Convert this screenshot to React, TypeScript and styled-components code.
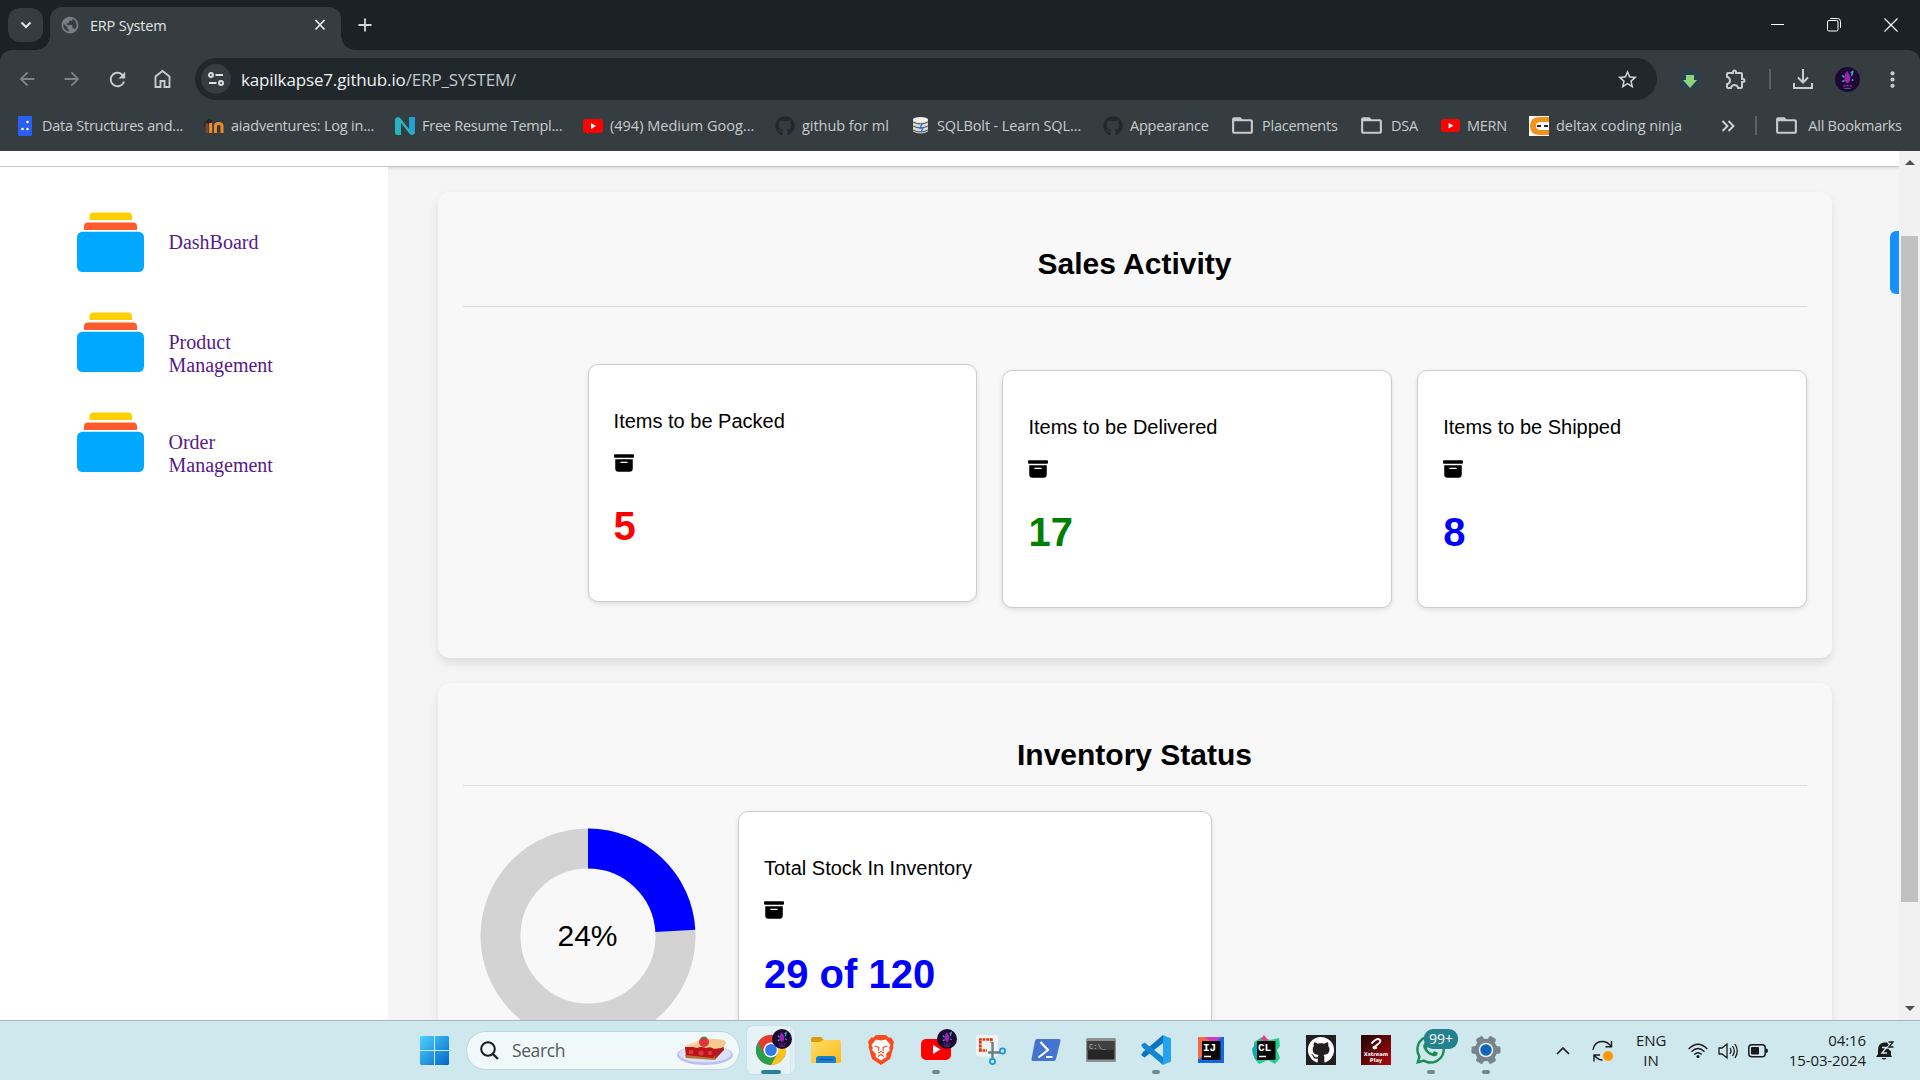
import React from "react";
import styled, { createGlobalStyle } from "styled-components";
import {
  MdArrowBack,
  MdArrowForward,
  MdRefresh,
  MdStarBorder,
  MdOutlineExtension,
  MdMoreVert,
  MdFolderOpen,
  MdPublic,
} from "react-icons/md";
import { BsFillArchiveFill } from "react-icons/bs";
import { FaGithub, FaWhatsapp } from "react-icons/fa";

const GlobalStyle = createGlobalStyle`
  * { box-sizing: border-box; }
  html, body { margin: 0; padding: 0; overflow: hidden; }
  svg { display: block; flex: none; }
`;

const ui = `"Open Sans", "Noto Sans", sans-serif`;

const Screen = styled.div`
  width: 1920px;
  height: 1080px;
  overflow: hidden;
  display: grid;
  grid-template-columns: 1920px;
  grid-template-rows: 50px 101px 869px 60px;
  background: #1b2225;
  font-family: ${ui};
`;

/* ---------- tab strip ---------- */

const TabStrip = styled.div`
  display: flex;
  align-items: stretch;
  background: #1b2225;
  color: #e3e6e6;
`;

const TabSearch = styled.div`
  width: 35px;
  height: 34px;
  margin: 8px 7px 0 8px;
  border-radius: 12px;
  background: #353d40;
  display: flex;
  align-items: center;
  justify-content: center;
`;

const Tab = styled.div`
  position: relative;
  width: 291px;
  height: 43px;
  margin-top: 7px;
  padding: 0 11px 7px 10px;
  display: flex;
  align-items: center;
  border-radius: 12px 12px 0 0;
  background: #353d40;
  &::before,
  &::after {
    content: "";
    position: absolute;
    bottom: 0;
    width: 14px;
    height: 14px;
  }
  &::before {
    left: -14px;
    background: radial-gradient(circle at 0 0, transparent 13.5px, #353d40 14px);
  }
  &::after {
    right: -14px;
    background: radial-gradient(circle at 100% 0, transparent 13.5px, #353d40 14px);
  }
`;

const TabTitle = styled.span`
  flex: 1;
  margin-left: 10px;
  font-size: 14.5px;
  letter-spacing: -0.2px;
`;

const NewTab = styled.div`
  width: 20px;
  margin-left: 13px;
  display: flex;
  align-items: center;
`;

const WindowButtons = styled.div`
  margin-left: auto;
  margin-right: 22px;
  display: flex;
  align-items: center;
  gap: 43px;
`;

/* ---------- toolbar and bookmarks ---------- */

const Toolbar = styled.div`
  background: #353d40;
  border-radius: 12px 12px 0 0;
  color: #c7cccd;
`;

const AddressRow = styled.div`
  height: 58px;
  display: flex;
  align-items: center;
`;

const NavButtons = styled.div`
  width: 195px;
  padding-left: 16px;
  display: flex;
  gap: 23px;
`;

const Dim = styled.span`
  color: #7d8486;
`;

const AddressBar = styled.div`
  width: 1462px;
  height: 42px;
  padding: 0 18px 0 6px;
  border-radius: 21px;
  background: #20282b;
  display: flex;
  align-items: center;
`;

const SiteInfo = styled.div`
  width: 30px;
  height: 30px;
  border-radius: 50%;
  background: #353d40;
  display: flex;
  align-items: center;
  justify-content: center;
`;

const Url = styled.div`
  flex: 1;
  margin-left: 10px;
  font-size: 17px;
  letter-spacing: -0.15px;
  color: #c3c8c9;
  b {
    font-weight: 400;
    color: #f0f2f2;
  }
`;

const ToolbarIcons = styled.div`
  flex: 1;
  display: flex;
  align-items: center;
  padding-left: 24px;
`;

const Slot = styled.div<{ $w: number; $ml?: number }>`
  width: ${(p) => p.$w}px;
  margin-left: ${(p) => p.$ml ?? 0}px;
  flex: none;
  display: flex;
  justify-content: center;
`;

const Divider = styled.div<{ $h: number }>`
  width: 2px;
  height: ${(p) => p.$h}px;
  background: #5a6264;
`;

const BookmarkRow = styled.div`
  height: 35px;
  display: flex;
  align-items: center;
  padding-left: 18px;
`;

const BookmarkItem = styled.div<{ $w: number }>`
  width: ${(p) => p.$w}px;
  display: flex;
  align-items: center;
`;

const BookmarkIcon = styled.div<{ $w: number }>`
  width: ${(p) => p.$w}px;
  flex: none;
`;

const BookmarkText = styled.span<{ $ls?: number }>`
  font-size: 14.5px;
  letter-spacing: ${(p) => p.$ls ?? -0.25}px;
  white-space: nowrap;
`;

/* ---------- page ---------- */

const Viewport = styled.div`
  display: grid;
  grid-template-columns: 1899px 21px;
  overflow: hidden;
  background: #fff;
`;

const Page = styled.div`
  position: relative;
  height: 869px;
  overflow: hidden;
  display: grid;
  grid-template-rows: 16px 853px;
`;

const PageHeader = styled.div`
  background: #fff;
  border-bottom: 1px solid #c6c6c6;
`;

const Body = styled.div`
  display: grid;
  grid-template-columns: 388px 1fr;
`;

const Sidebar = styled.nav`
  background: #fff;
  padding: 45px 0 0 77px;
  display: flex;
  flex-direction: column;
`;

const NavItem = styled.a`
  height: 100px;
  display: flex;
  font-family: "Liberation Serif", serif;
  font-size: 20px;
  line-height: 23px;
  color: #551a8b;
`;

const NavLabel = styled.span`
  width: 120px;
  margin: 19px 0 0 23.5px;
`;

const Main = styled.main`
  background: #f5f5f5;
  padding: 25px 67px 0 50px;
  box-shadow: inset 0 4px 3px -2px rgba(0, 0, 0, 0.09);
  font-family: "Liberation Sans", Arial, sans-serif;
  color: #000;
`;

const Panel = styled.section<{ $h: number }>`
  height: ${(p) => p.$h}px;
  padding: 25px;
  margin-bottom: 25px;
  border-radius: 12px;
  background: #f8f8f8;
  box-shadow: 0 5px 10px rgba(0, 0, 0, 0.1);
`;

const PanelTitle = styled.h2<{ $gap: number }>`
  margin: 0;
  padding: 29px 1px ${(p) => p.$gap}px 0;
  border-bottom: 1px solid #dcdcdc;
  text-align: center;
  font-size: 30px;
  line-height: 36px;
`;

const CardRow = styled.div`
  display: flex;
  justify-content: flex-end;
  align-items: flex-start;
  gap: 25px;
  padding-top: 63px;
`;

const InventoryRow = styled.div`
  display: flex;
  gap: 25px;
  padding-top: 25px;
`;

const Card = styled.div<{ $w: number; $raised?: boolean }>`
  width: ${(p) => p.$w}px;
  height: 238px;
  margin-top: ${(p) => (p.$raised ? -6 : 0)}px;
  padding: 44px 24px 0 25px;
  border: 1px solid #ccc;
  border-radius: 10px;
  background: #fff;
  box-shadow: 0 2px 5px rgba(0, 0, 0, 0.1);
`;

const CardLabel = styled.div`
  font-size: 20px;
  line-height: 24px;
  margin-bottom: 20px;
`;

const CardValue = styled.div<{ $color: string; $drop?: number }>`
  margin-top: ${(p) => 30 + (p.$drop ?? 0)}px;
  font-size: 40px;
  line-height: 46px;
  font-weight: 700;
  color: ${(p) => p.$color};
`;

const SideHandle = styled.div`
  position: absolute;
  right: 0;
  top: 80px;
  width: 9px;
  height: 63px;
  border-radius: 6px 0 0 6px;
  background: #1890ff;
`;

const Scrollbar = styled.div`
  background: #f1f1f1;
  display: flex;
  flex-direction: column;
  align-items: center;
  padding: 9px 0 9px;
`;

const Thumb = styled.div`
  width: 17px;
  height: 666px;
  margin: 71px 0 auto;
  background: #c1c1c1;
`;

/* ---------- taskbar ---------- */

const Taskbar = styled.div`
  display: flex;
  align-items: center;
  background: #cfe8ee;
  border-top: 1px solid #a5b8c0;
  padding-left: 420px;
  color: #1b1b1b;
`;

const SearchBox = styled.div`
  width: 274px;
  height: 39px;
  flex: none;
  margin: 0 7px 0 17px;
  padding: 0 6px 0 13px;
  border-radius: 20px;
  background: #f0f8fa;
  border: 1px solid #bdd5dc;
  display: flex;
  align-items: center;
`;

const SearchText = styled.span`
  flex: 1;
  margin-left: 13px;
  font-size: 17.5px;
  letter-spacing: -0.4px;
  line-height: 22px;
  padding-bottom: 2px;
  color: #53595b;
`;

const Apps = styled.div`
  display: flex;
  height: 60px;
`;

const AppButton = styled.div<{ $active?: boolean }>`
  position: relative;
  flex: none;
  width: ${(p) => (p.$active ? 48 : 49)}px;
  height: 48px;
  margin: 5px 6px 0 0;
  border-radius: 6px;
  background: ${(p) => (p.$active ? "linear-gradient(90deg, #e6f3f6 43px, #cfe0e5 43px, #dfeff3 44px)" : "transparent")};
  box-shadow: ${(p) => (p.$active ? "0 0 1px #9fb9c0" : "none")};
  display: flex;
  align-items: center;
  justify-content: center;
`;

const Indicator = styled.div<{ $active?: boolean }>`
  position: absolute;
  bottom: 0;
  left: 50%;
  width: ${(p) => (p.$active ? 20 : 8)}px;
  height: 4px;
  margin-left: ${(p) => (p.$active ? -10 : -4)}px;
  border-radius: 2px;
  background: ${(p) => (p.$active ? "#2a8296" : "#76878c")};
`;

const AppBadge = styled.div`
  position: absolute;
  right: 3px;
  top: 3px;
`;

const CountBadge = styled.div`
  position: absolute;
  left: 18px;
  top: 3px;
  width: 34px;
  height: 20px;
  border-radius: 9px;
  background: #24828f;
  color: #fff;
  font-size: 14px;
  line-height: 19px;
  text-align: center;
`;

const Tray = styled.div`
  flex: 1;
  display: flex;
  align-items: center;
  padding-left: 40px;
`;

const TrayText = styled.div<{ $w: number; $align: string }>`
  width: ${(p) => p.$w}px;
  flex: none;
  padding-bottom: 2px;
  text-align: ${(p) => p.$align};
  font-size: 15px;
  line-height: 20px;
  letter-spacing: -0.1px;
  white-space: nowrap;
`;

/* ---------- drawings ---------- */

const Youtube = ({ w = 20 }: { w?: number }) => (
  <svg width={w} height={(w * 14) / 20} viewBox="0 0 20 14">
    <rect width="20" height="14" rx="3.4" fill="#f00" />
    <path d="M8 4v6l5-3z" fill="#fff" />
  </svg>
);

const Avatar = ({ size = 24 }: { size?: number }) => (
  <svg width={size} height={size} viewBox="0 0 24 24">
    <circle cx="12" cy="12" r="12" fill="#1f0733" />
    <path d="M10 6l2-2 1.500 3 1.500 2-1 5-2 2-3-3 .5-4z" fill="#a01fb4" />
    <path d="M7 8l2 2M15 5.500l2-1-1 4M7 14l2-1M16 12l1.500 1" stroke="#1fb6c4" strokeWidth="1.500" fill="none" />
    <path d="M8 18h8" stroke="#9a2aa8" strokeWidth="1.300" strokeDasharray="2 1" />
    <path d="M9 20.500h6" stroke="#3d6fb0" strokeWidth="1" />
  </svg>
);

const Prompt = ({ label, children }: { label: string; children?: React.ReactNode }) => (
  <svg width="30" height="30" viewBox="0 0 30 30">
    {children}
    <rect x="6" y="6" width="18.500" height="19" fill="#090909" />
    <text x="7" y="15.500" fontFamily="Liberation Mono, monospace" fontWeight="700" fontSize="11" fill="#fff">
      {label}
    </text>
    <path d="M8 21.500h7" stroke="#fff" strokeWidth="1.500" />
  </svg>
);

const Chrome = () => (
  <svg width="30" height="30" viewBox="0 0 30 30">
    <circle cx="15" cy="15" r="15" fill="#e33b2e" />
    <path d="M2 7.500A15 15 0 0 0 15 30l6.500-11.300L15 15z" fill="#2b9f4b" />
    <path d="M28 7.500A15 15 0 0 1 15 30l6.500-11.300L22 12l-7-4.500z" fill="#fcc31e" />
    <path d="M2 7.500A15 15 0 0 1 28 7.500H15L8.500 18.700z" fill="#e33b2e" />
    <circle cx="15" cy="15" r="7.500" fill="#fff" />
    <circle cx="15" cy="15" r="5.900" fill="#3578e8" />
  </svg>
);

const Explorer = () => (
  <svg width="30" height="28" viewBox="0 0 30 28">
    <defs>
      <linearGradient id="folder" x2="1" y2="1">
        <stop offset="0" stopColor="#ffdc6a" />
        <stop offset="1" stopColor="#fdbb16" />
      </linearGradient>
    </defs>
    <path d="M0 3q0-2 2-2h8l3 3-3 4H0z" fill="#dc9d08" />
    <path d="M0 6h9l3-2h16q2 0 2 2v19.500q0 1.500-1.500 1.500H0z" fill="url(#folder)" />
    <path d="M5 27v-4q0-3 3-3h14q3 0 3 3v4z" fill="#1480d0" />
    <path d="M8.500 23.500h13" stroke="#084f92" strokeWidth="1.300" />
  </svg>
);

const Brave = () => (
  <svg width="26" height="30" viewBox="0 0 26 30">
    <path d="M8 0h10l2.500 2.500h2.500L26 7l-1 3 .5 2L22 24l-9 6-9-6L.5 12 1 10 0 7l3-4.500h2.500z" fill="#fb4a1b" />
    <path
      d="M8 4.500l5 1 5-1 4.500 5.500-1.500 3 1 2-4 4 .5 3-5.500 3.500L7.500 22l.5-3-4-4 1-2-1.500-3z"
      fill="#fff"
    />
    <path d="M6.500 11l4.500 1.500-.5 3.500M19.500 11L15 12.500l.5 3.500M10 18l3-1.500L16 18M10 21.500l3-2 3 2" stroke="#fb4a1b" strokeWidth="1.100" fill="none" />
  </svg>
);

const Snip = () => (
  <svg width="30" height="30" viewBox="0 0 30 30">
    <rect width="22" height="21.500" rx="3" fill="#f1f1f1" />
    <path d="M3 4.500h13.500M4.300 6v11" stroke="#d83b12" strokeWidth="2.700" strokeDasharray="2.800 .8" fill="none" />
    <path d="M3 15.500h8M15.200 3.500v4" stroke="#d83b12" strokeWidth="2.700" strokeDasharray="2.800 .8" />
    <path d="M16.500 7v16M12 17.500h12" stroke="#6b7f89" strokeWidth="2.400" />
    <circle cx="16.500" cy="26.500" r="2.600" fill="none" stroke="#1795dd" strokeWidth="1.700" />
    <circle cx="26.500" cy="16" r="2.600" fill="none" stroke="#1795dd" strokeWidth="1.700" />
  </svg>
);

const PowerShell = () => (
  <svg width="30" height="22" viewBox="0 0 30 22">
    <path d="M6 0h22q2 0 1.500 2L25 20q-.5 2-2.500 2H2q-2 0-1.500-2L4 2q.5-2 2-2z" fill="#4474cf" />
    <path d="M9.500 3l7.500 8-9.500 7.500M15 18h6.500" stroke="#fff" strokeWidth="2.200" fill="none" />
  </svg>
);

const Terminal = () => (
  <svg width="30" height="24" viewBox="0 0 30 24">
    <rect width="30" height="24" rx="1.500" fill="#8d9091" />
    <rect x="1.500" y="3" width="27" height="18.500" fill="#262626" />
    <path d="M1.500 3h27v9h-27z" fill="#414141" />
    <text x="3" y="11" fontFamily="Liberation Mono, monospace" fontSize="7" fill="#c0c0c0">
      C:\_
    </text>
  </svg>
);

const VSCode = () => (
  <svg width="30" height="30" viewBox="0 0 30 30">
    <path d="M22 0l8 3.500v23L22 30z" fill="#25a4ee" />
    <path d="M22 0v8L3.500 22.500 0 20l2-3z" fill="#0b74bd" />
    <path d="M0 10l3.500-2.500L22 22v8L2 13z" fill="#1286d4" />
  </svg>
);

const Airtel = () => (
  <svg width="30" height="30" viewBox="0 0 30 30">
    <defs>
      <linearGradient id="airtel" x2="1" y2="1">
        <stop offset="0" stopColor="#1c0304" />
        <stop offset="1" stopColor="#b00a10" />
      </linearGradient>
    </defs>
    <rect width="30" height="30" fill="url(#airtel)" />
    <path d="M10.500 8.500Q16 2.500 18.500 4.500t-2 5q-2 2-4 3 0 2 3.500 0" stroke="#fff" strokeWidth="2" fill="none" />
    <text x="15" y="20.500" textAnchor="middle" fontFamily="DejaVu Sans, sans-serif" fontWeight="700" fontSize="5.200" fill="#fff">
      Xstream
    </text>
    <text x="15" y="27" textAnchor="middle" fontFamily="DejaVu Sans, sans-serif" fontWeight="700" fontSize="5.200" fill="#fff">
      Play
    </text>
  </svg>
);

const Gear = () => (
  <svg width="30" height="30" viewBox="-15 -15 30 30">
    {[0, 60, 120].map((a) => (
      <rect key={a} x="-3.800" y="-14.500" width="7.600" height="29" rx="1.800" fill="#79838b" transform={`rotate(${a + 30})`} />
    ))}
    <circle r="11.300" fill="#79838b" />
    <circle r="7.300" fill="#e6edf0" />
    <circle r="5.700" fill="#0f66b8" />
  </svg>
);

const Pie = () => (
  <svg width="56" height="30" viewBox="0 0 56 30">
    <ellipse cx="28" cy="19" rx="28" ry="10" fill="#b9c1f0" />
    <ellipse cx="28" cy="18" rx="26" ry="8.500" fill="#dde2fb" />
    <path d="M8 11h33l3 3-8 9-27-2z" fill="#b8141b" />
    <path d="M8 19l28 3 8-9 2 1-8 10-29-2z" fill="#b8752f" />
    <path d="M39 12l7-4 1 6-9 9z" fill="#b01a1c" />
    <path d="M7 11Q20 2.500 38 3q9 0 11 3 0 4-5 6l-7 1q-3-3-8-1-5-2-9 0-6-2-13-1z" fill="#f3c98d" />
    <path d="M9 10q12-5 22-4" stroke="#fbe0b4" strokeWidth="1.600" fill="none" />
    <circle cx="27" cy="6" r="5" fill="#e0333b" />
    <path d="M24 1.500q3-2 6 0l-3 2z" fill="#4d8b34" />
    <circle cx="14" cy="16" r="2.300" fill="#df373c" />
    <circle cx="24" cy="17" r="2.600" fill="#df373c" />
    <circle cx="33" cy="17" r="2.300" fill="#df373c" />
  </svg>
);

const StackIcon = () => (
  <svg width="68" height="60" viewBox="0 0 68 60">
    <path d="M12.500 8V4.500q0-4 4-4h34.500q4 0 4 4V8z" fill="#ffcf00" />
    <path d="M7 18v-3.500q0-4 4-4h45q4 0 4 4V18z" fill="#ff5a2c" />
    <rect y="19.700" width="67" height="40.300" rx="5.500" fill="#00a9ff" />
  </svg>
);

const Donut = ({ percent }: { percent: number }) => {
  const length = 2 * Math.PI * 87.5;
  return (
    <svg width="250" height="250" viewBox="0 0 250 250">
      <circle cx="125" cy="125" r="87.500" fill="none" stroke="#d3d3d3" strokeWidth="40" />
      <circle
        cx="125"
        cy="125"
        r="87.500"
        fill="none"
        stroke="#00f"
        strokeWidth="40"
        strokeDasharray={`${(length * percent) / 100} ${length}`}
        transform="rotate(-90 125 125)"
      />
      <text x="124.500" y="135" textAnchor="middle" fontFamily="Liberation Sans, Arial, sans-serif" fontSize="30">
        {percent}%
      </text>
    </svg>
  );
};

const GreyFolder = () => <MdFolderOpen size={25} />;

const bookmarks: { text: string; w: number; iw: number; ls?: number; icon: React.ReactNode }[] = [
  {
    text: "Data Structures and...", w: 186, iw: 24,
    icon: (
      <svg width="14" height="20" viewBox="0 0 14 20">
        <rect width="14" height="20" rx="1" fill="#2a5ff5" />
        <g fill="#fff"><circle cx="9.500" cy="6" r="1.300" /><circle cx="4.500" cy="13" r="1.300" /><circle cx="9.500" cy="13" r="1.300" /></g>
      </svg>
    ),
  },
  {
    text: "aiadventures: Log in...", w: 191, iw: 27, ls: -0.19,
    icon: (
      <svg width="20" height="16" viewBox="0 0 20 16">
        <path d="M3 15V5.500M8 15V5.500" stroke="#7a4a2c" strokeWidth="2.400" fill="none" />
        <path d="M6.500 15V5M11.500 15V8q0-2.500 3.200-2.500T18 8v7" stroke="#ef8a2b" strokeWidth="3" fill="none" />
        <path d="M0 4l5-3 4 2-4 2.500z" fill="#2a2522" />
        <path d="M.5 4v5" stroke="#2a2522" />
      </svg>
    ),
  },
  {
    text: "Free Resume Templ...", w: 188, iw: 27,
    icon: (
      <svg width="20" height="18" viewBox="0 0 20 18">
        <path d="M0 2q3-4 6 0l8 10V0h4q2 0 2 2v14q-3 4-6 0L6 6v12H2q-2 0-2-2z" fill="#27b3bf" />
        <path d="M14 0h6v16l-6-4z" fill="#1f9fd6" />
      </svg>
    ),
  },
  { text: "(494) Medium Goog...", w: 192, iw: 27, ls: 0, icon: <Youtube /> },
  { text: "github for ml", w: 138, iw: 27, ls: -0.05, icon: <FaGithub size={20} color="#22292c" /> },
  {
    text: "SQLBolt - Learn SQL...", w: 190, iw: 24, ls: -0.11,
    icon: (
      <svg width="15" height="17" viewBox="0 0 15 17">
        <path d="M0 2.500v12q7.500 4 15 0v-12z" fill="#d9d9d4" />
        <ellipse cx="7.500" cy="2.500" rx="7.500" ry="2.500" fill="#f3f2ec" />
        <path d="M0 5q7.500 4 15 0M0 9q7.500 4 15 0M0 13q7.500 4 15 0" stroke="#454545" fill="none" />
        <path d="M9 7l-2 4h3l-2 4" stroke="#2277dd" strokeWidth="1.300" fill="none" />
      </svg>
    ),
  },
  { text: "Appearance", w: 127, iw: 27, icon: <FaGithub size={20} color="#22292c" /> },
  { text: "Placements", w: 129, iw: 32, icon: <GreyFolder /> },
  { text: "DSA", w: 82, iw: 32, icon: <GreyFolder /> },
  { text: "MERN", w: 88, iw: 26, icon: <Youtube w={19} /> },
  {
    text: "deltax coding ninja", w: 189, iw: 27, ls: -0.06,
    icon: (
      <svg width="20" height="20" viewBox="0 0 20 20">
        <rect width="20" height="20" fill="#fff" />
        <path d="M20 1h-9Q1 1 1 10t10 9h9v-5h-8q-5 0-5-4t5-4h8z" fill="#f2921d" />
        <path d="M8 10h4M15 10h4" stroke="#26282c" strokeWidth="2" />
      </svg>
    ),
  },
];

const salesCards = [
  { label: "Items to be Packed", value: "5", color: "red" },
  { label: "Items to be Delivered", value: "17", color: "green" },
  { label: "Items to be Shipped", value: "8", color: "blue" },
];

const apps: { icon: React.ReactNode; running?: boolean; active?: boolean; avatar?: boolean; count?: string }[] = [
  { icon: <Chrome />, running: true, active: true, avatar: true },
  { icon: <Explorer /> },
  { icon: <Brave /> },
  { icon: <Youtube w={30} />, running: true, avatar: true },
  { icon: <Snip /> },
  { icon: <PowerShell /> },
  { icon: <Terminal /> },
  { icon: <VSCode />, running: true },
  {
    icon: (
      <Prompt label="IJ">
        <path d="M2 2h26v26H2z" fill="#1566e0" />
        <path d="M2 2h20L4 24H2z" fill="#f26a3d" />
        <path d="M8 2h18l-8 6z" fill="#cf3bc0" />
      </Prompt>
    ),
  },
  {
    icon: (
      <Prompt label="CL">
        <path d="M3 7l8-5 8 3 9-2 1 8-3 4 3 8-5 6-7-4-9 4-5-6z" fill="#22cf8a" />
        <path d="M1 14l5-8v20l-4-6z" fill="#14a7b0" />
        <path d="M10 4l3-4 4 5-3 3z" fill="#ef3c8c" />
      </Prompt>
    ),
  },
  {
    icon: (
      <svg width="30" height="30" viewBox="0 0 30 30">
        <rect width="30" height="30" fill="#231f20" />
        <FaGithub x={1.5} y={1.5} size={27} color="#fff" />
      </svg>
    ),
  },
  { icon: <Airtel /> },
  { icon: <FaWhatsapp size={33} color="#1c8c57" />, running: true, count: "99+" },
  { icon: <Gear />, running: true },
];

const StatCard = ({
  label,
  value,
  color,
  width,
  raised,
  drop,
}: {
  label: string;
  value: string;
  color: string;
  width: number;
  raised?: boolean;
  drop?: number;
}) => (
  <Card $w={width} $raised={raised}>
    <CardLabel>{label}</CardLabel>
    <BsFillArchiveFill size={20} />
    <CardValue $color={color} $drop={drop}>{value}</CardValue>
  </Card>
);

export default function App() {
  return (
    <Screen>
      <GlobalStyle />
      <TabStrip>
        <TabSearch>
          <svg width="12" height="8" viewBox="0 0 12 8"><path d="M1.500 1.500L6 6l4.500-4.500" stroke="#e3e6e6" strokeWidth="2" fill="none" /></svg>
        </TabSearch>
        <Tab>
          <MdPublic size={20} color="#788083" />
          <TabTitle>ERP System</TabTitle>
          <svg width="20" height="12" viewBox="0 0 20 12"><path d="M5.500 1l9 9.500M14.500 1l-9 9.500" stroke="#e3e6e6" strokeWidth="1.800" /></svg>
        </Tab>
        <NewTab>
          <svg width="20" height="14" viewBox="0 0 20 14"><path d="M11 0.500v13M4.500 7h13" stroke="#d3d8d8" strokeWidth="1.800" /></svg>
        </NewTab>
        <WindowButtons>
          <svg width="13" height="14" viewBox="0 0 13 14"><path d="M0 6.500h13" stroke="#fff" /></svg>
          <svg width="14" height="14" viewBox="0 0 14 14">
            <path d="M3 .5h7.500q3 0 3 3V10" stroke="#fff" fill="none" />
            <rect x=".5" y="2.500" width="10.500" height="10.500" rx="1.500" stroke="#fff" fill="none" />
          </svg>
          <svg width="14" height="14" viewBox="0 0 14 14"><path d="M.5.5l13 13M13.500.5l-13 13" stroke="#fff" strokeWidth="1.200" /></svg>
        </WindowButtons>
      </TabStrip>

      <Toolbar>
        <AddressRow>
          <NavButtons>
            <Dim><MdArrowBack size={22} /></Dim>
            <Dim><MdArrowForward size={22} /></Dim>
            <MdRefresh size={23} />
            <svg width="22" height="22" viewBox="0 0 22 22">
              <path d="M3.500 19V8.500L10.500 3l7 5.500V19h-5v-6h-4v6z" stroke="#c7cccd" strokeWidth="1.900" fill="none" />
            </svg>
          </NavButtons>
          <AddressBar>
            <SiteInfo>
              <svg width="16" height="14" viewBox="0 0 16 14" fill="none" stroke="#dfe3e3" strokeWidth="1.900">
                <circle cx="3" cy="3" r="2" /><path d="M7.500 3H15M1 11h7.500" /><circle cx="13" cy="11" r="2" />
              </svg>
            </SiteInfo>
            <Url><b>kapilkapse7.github.io</b>/ERP_SYSTEM/</Url>
            <MdStarBorder size={23} color="#d0d4d5" />
          </AddressBar>
          <ToolbarIcons>
            <Slot $w={18}>
              <svg width="18" height="20" viewBox="0 0 18 20">
                <rect width="18" height="20" rx="2" fill="#2a3f50" />
                <path d="M5 6h8v5h3l-7 8-7-8h3z" fill="#8bd67c" />
              </svg>
            </Slot>
            <Slot $w={66} $ml={4}><MdOutlineExtension size={24} /></Slot>
            <Divider $h={20} />
            <Slot $w={64}>
              <svg width="22" height="22" viewBox="0 0 22 22" fill="none" stroke="#c7cccd" strokeWidth="2">
                <path d="M11 1v13M6 9.500l5 5 5-5M2 15v5h18v-5" />
              </svg>
            </Slot>
            <Slot $w={24}><Avatar size={25} /></Slot>
            <Slot $w={46} $ml={10}><MdMoreVert size={25} /></Slot>
          </ToolbarIcons>
        </AddressRow>
        <BookmarkRow>
          {bookmarks.map((b) => (
            <BookmarkItem key={b.text} $w={b.w}>
              <BookmarkIcon $w={b.iw}>{b.icon}</BookmarkIcon>
              <BookmarkText $ls={b.ls}>{b.text}</BookmarkText>
            </BookmarkItem>
          ))}
          <Slot $w={20}>
            <svg width="14" height="12" viewBox="0 0 14 12"><path d="M1.500 1l5 5-5 5M7.500 1l5 5-5 5" stroke="#d0d4d5" strokeWidth="1.900" fill="none" /></svg>
          </Slot>
          <Slot $w={36}><Divider $h={19} /></Slot>
          <Slot $w={25}><GreyFolder /></Slot>
          <Slot $w={94} $ml={9}><BookmarkText>All Bookmarks</BookmarkText></Slot>
        </BookmarkRow>
      </Toolbar>

      <Viewport>
        <Page>
          <PageHeader />
          <Body>
            <Sidebar>
              {["DashBoard", "Product Management", "Order Management"].map((t) => (
                <NavItem key={t}>
                  <StackIcon />
                  <NavLabel>{t}</NavLabel>
                </NavItem>
              ))}
            </Sidebar>
            <Main>
              <Panel $h={466}>
                <PanelTitle $gap={24}>Sales Activity</PanelTitle>
                <CardRow>
                  {salesCards.map((c, i) => (
                    <StatCard key={c.label} {...c} width={389.8} raised={i === 0} />
                  ))}
                </CardRow>
              </Panel>
              <Panel $h={460}>
                <PanelTitle $gap={12}>Inventory Status</PanelTitle>
                <InventoryRow>
                  <Donut percent={24} />
                  <StatCard label="Total Stock In Inventory" value="29 of 120" color="blue" width={474} drop={1} />
                </InventoryRow>
              </Panel>
            </Main>
          </Body>
          <SideHandle />
        </Page>
        <Scrollbar>
          <svg width="10" height="5" viewBox="0 0 10 5"><path d="M0 5l5-5 5 5z" fill="#505050" /></svg>
          <Thumb />
          <svg width="10" height="5" viewBox="0 0 10 5"><path d="M0 0l5 5 5-5z" fill="#505050" /></svg>
        </Scrollbar>
      </Viewport>

      <Taskbar>
        <svg width="29" height="29" viewBox="0 0 29 29">
          <defs>
            <linearGradient id="win" x2="1" y2="1"><stop offset="0" stopColor="#4fd2ff" /><stop offset="1" stopColor="#0067c8" /></linearGradient>
          </defs>
          <path d="M1 0h13v14H0V1zM15 0h13l1 1v13H15zM0 15h14v14H1l-1-1zM15 15h14v13l-1 1H15z" fill="url(#win)" />
        </svg>
        <SearchBox>
          <svg width="19" height="19" viewBox="0 0 19 19"><circle cx="8" cy="8" r="6.800" stroke="#1b1b1b" strokeWidth="2" fill="none" /><path d="M13 13l5 5" stroke="#1b1b1b" strokeWidth="2.200" /></svg>
          <SearchText>Search</SearchText>
          <Pie />
        </SearchBox>
        <Apps>
          {apps.map((a, i) => (
            <AppButton key={i} $active={a.active}>
              {a.icon}
              {a.avatar && <AppBadge><Avatar size={20} /></AppBadge>}
              {a.count && <CountBadge>{a.count}</CountBadge>}
              {a.running && <Indicator $active={a.active} />}
            </AppButton>
          ))}
        </Apps>
        <Tray>
          <Slot $w={14}><svg width="14" height="8" viewBox="0 0 14 8"><path d="M1 7l6-6 6 6" stroke="#1b1b1b" strokeWidth="1.700" fill="none" /></svg></Slot>
          <Slot $w={66}>
            <svg width="22" height="22" viewBox="0 0 22 22" fill="none" stroke="#1b1b1b" strokeWidth="1.400">
              <path d="M1 10Q2.500 1.500 10 1.500q6 0 9 5M19.500 1v5.800h-6M2 21.500V15h6M2.500 15.500Q6 20 10.500 20" />
              <circle cx="16" cy="16" r="5" fill="#ff9800" stroke="none" />
            </svg>
          </Slot>
          <TrayText $w={30} $align="center">ENG<br />IN</TrayText>
          <Slot $w={40} $ml={12}>
            <svg width="20" height="16" viewBox="0 0 20 16" fill="none" stroke="#1b1b1b" strokeWidth="1.400">
              <path d="M.7 6Q10-3.500 19.300 6M3.500 8.700q6.500-6.500 13 0M6.300 11.500q3.700-3.700 7.400 0" />
              <circle cx="10" cy="13.500" r="1.600" fill="#1b1b1b" stroke="none" />
            </svg>
          </Slot>
          <svg width="20" height="18" viewBox="0 0 20 18" fill="none" stroke="#1b1b1b" strokeWidth="1.300">
            <path d="M1 6h3l5-4v14l-5-4H1zM12 6q2 3 0 6M14.500 4q3.500 5 0 10M17 2q4.500 7 0 14" />
          </svg>
          <Slot $w={40}>
            <svg width="20" height="14" viewBox="0 0 20 14">
              <rect x=".8" y=".8" width="16.400" height="12" rx="3" fill="none" stroke="#1b1b1b" strokeWidth="1.500" />
              <rect x="3" y="3" width="8" height="7.600" rx="1" fill="#1b1b1b" />
              <path d="M18 4.500q2 0 2 2.300T18 9z" fill="#1b1b1b" />
            </svg>
          </Slot>
          <TrayText $w={88} $align="right">04:16<br />15-03-2024</TrayText>
          <Slot $w={38}>
            <svg width="18" height="20" viewBox="0 0 18 20">
              <path d="M2 9q0-7 6-7.500h3L13 4v5l2 1v4l1 2H0l2-3z" fill="#1b1b1b" />
              <path d="M5.500 17q2.500 3 5 0z" fill="#1b1b1b" />
              <path d="M6 6.500h4.500L6 12h5" stroke="#cfe8ee" strokeWidth="1.400" fill="none" />
              <path d="M12.500 1H17l-4 5h4.500" stroke="#cfe8ee" strokeWidth="3.400" fill="none" />
              <path d="M12.500 1H17l-4 5h4.500" stroke="#1b1b1b" strokeWidth="1.400" fill="none" />
            </svg>
          </Slot>
        </Tray>
      </Taskbar>
    </Screen>
  );
}
